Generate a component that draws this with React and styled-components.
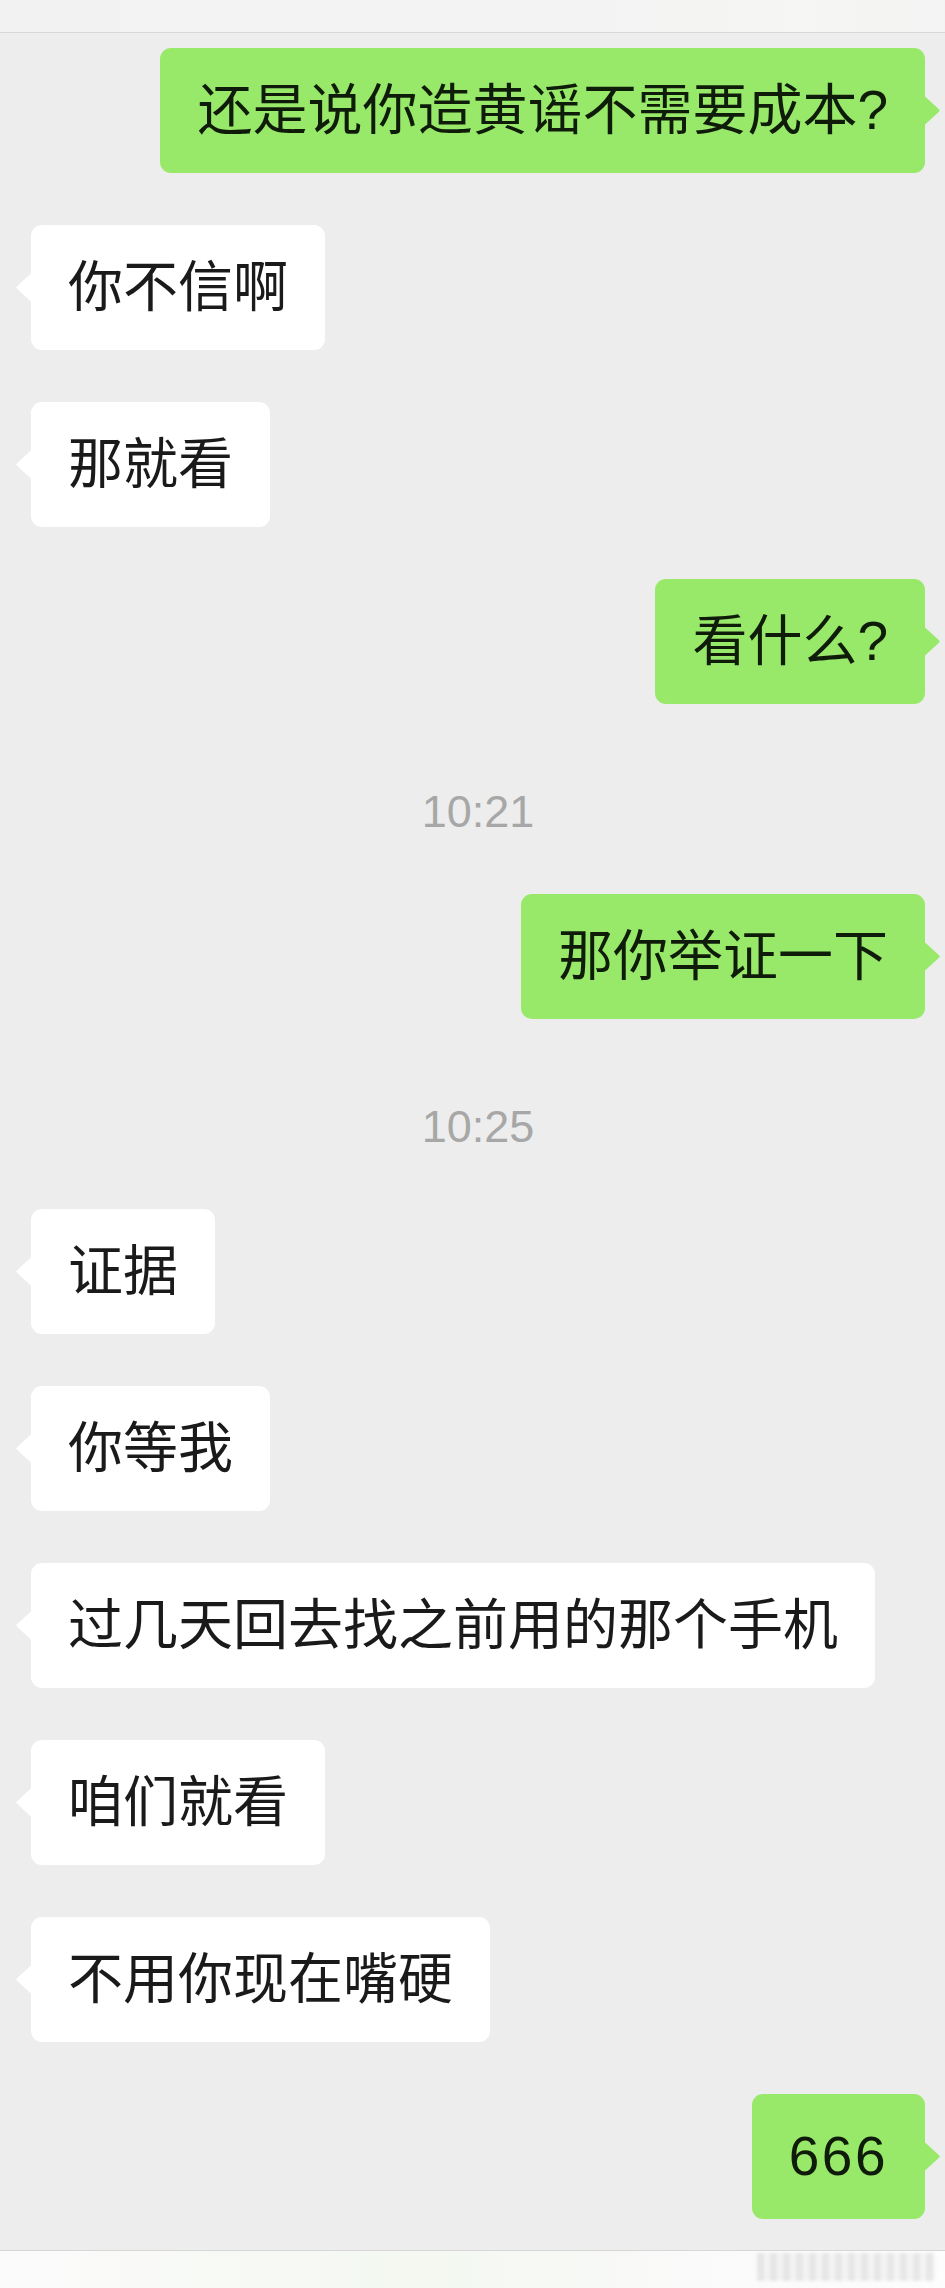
import React from "react";
import styled, { createGlobalStyle } from "styled-components";

const GlobalStyle = createGlobalStyle`
  html, body {
    margin: 0;
    padding: 0;
    background: #ededed;
  }
  body {
    font-family: "Liberation Sans", "Noto Sans CJK SC", sans-serif;
  }
`;

const Screen = styled.div`
  width: 945px;
  height: 2288px;
  display: flex;
  flex-direction: column;
  background: #ededed;
  overflow: hidden;
`;

const TopBar = styled.div`
  height: 32px;
  flex-shrink: 0;
  background: linear-gradient(90deg, #f2f2f2 0%, #f3f3f3 65%, #f6f7f4 85%, #f3f3f3 100%);
  border-bottom: 1px solid #d8d8d8;
`;

const ChatList = styled.div`
  flex: 1;
  display: flex;
  flex-direction: column;
  gap: 52px;
  padding: 15px 20px 0 31px;
`;

const Row = styled.div`
  display: flex;
  justify-content: ${(p) => (p.$mine ? "flex-end" : "flex-start")};
`;

const Bubble = styled.div`
  position: relative;
  padding: 35px 37px;
  font-size: 55px;
  line-height: 55px;
  letter-spacing: ${(p) => (p.$latin ? "2.5px" : "normal")};
  white-space: nowrap;
  border-radius: 11px;
  background: ${(p) => (p.$mine ? "#98e96a" : "#ffffff")};
  color: ${(p) => (p.$mine ? "#0f1c0a" : "#1a1a1a")};

  &::before {
    content: "";
    position: absolute;
    top: 50%;
    width: 16px;
    height: 30px;
    transform: translateY(-50%);
    background: inherit;
    ${(p) =>
      p.$mine
        ? `right: -15px; clip-path: polygon(0 0, 85% 42%, 100% 50%, 85% 58%, 0 100%);`
        : `left: -15px; clip-path: polygon(100% 0, 15% 42%, 0 50%, 15% 58%, 100% 100%);`}
  }
`;

const TimeStamp = styled.div`
  padding: 28px 0 2px;
  line-height: 56px;
  font-size: 45px;
  color: #a7a7a7;
  text-align: center;
`;

const BottomBar = styled.div`
  height: 37px;
  flex-shrink: 0;
  display: flex;
  justify-content: flex-end;
  align-items: flex-start;
  padding-right: 10px;
  background: linear-gradient(90deg, #fbfbfb 0%, #f4f8f1 45%, #fafafa 75%, #fdfdfd 100%);
  border-top: 1px solid #d6d6d6;
`;

const Watermark = styled.div`
  width: 178px;
  height: 28px;
  margin-top: 2px;
  opacity: 0.4;
  filter: blur(1.5px);
  background: repeating-linear-gradient(
    90deg,
    #c9c9c9 0px,
    #c9c9c9 7px,
    #e8e8e8 7px,
    #e8e8e8 13px
  );
`;

const messages = [
  { mine: true, text: "还是说你造黄谣不需要成本?" },
  { text: "你不信啊" },
  { text: "那就看" },
  { mine: true, text: "看什么?" },
  { time: "10:21" },
  { mine: true, text: "那你举证一下" },
  { time: "10:25" },
  { text: "证据" },
  { text: "你等我" },
  { text: "过几天回去找之前用的那个手机" },
  { text: "咱们就看" },
  { text: "不用你现在嘴硬" },
  { mine: true, latin: true, text: "666" },
];

const App = () => {
  return (
    <>
      <GlobalStyle />
      <Screen>
        <TopBar />
        <ChatList>
          {messages.map((m, i) =>
            m.time ? (
              <TimeStamp key={i}>{m.time}</TimeStamp>
            ) : (
              <Row key={i} $mine={m.mine}>
                <Bubble $mine={m.mine} $latin={m.latin}>
                  {m.text}
                </Bubble>
              </Row>
            )
          )}
        </ChatList>
        <BottomBar>
          <Watermark />
        </BottomBar>
      </Screen>
    </>
  );
};

export default App;
